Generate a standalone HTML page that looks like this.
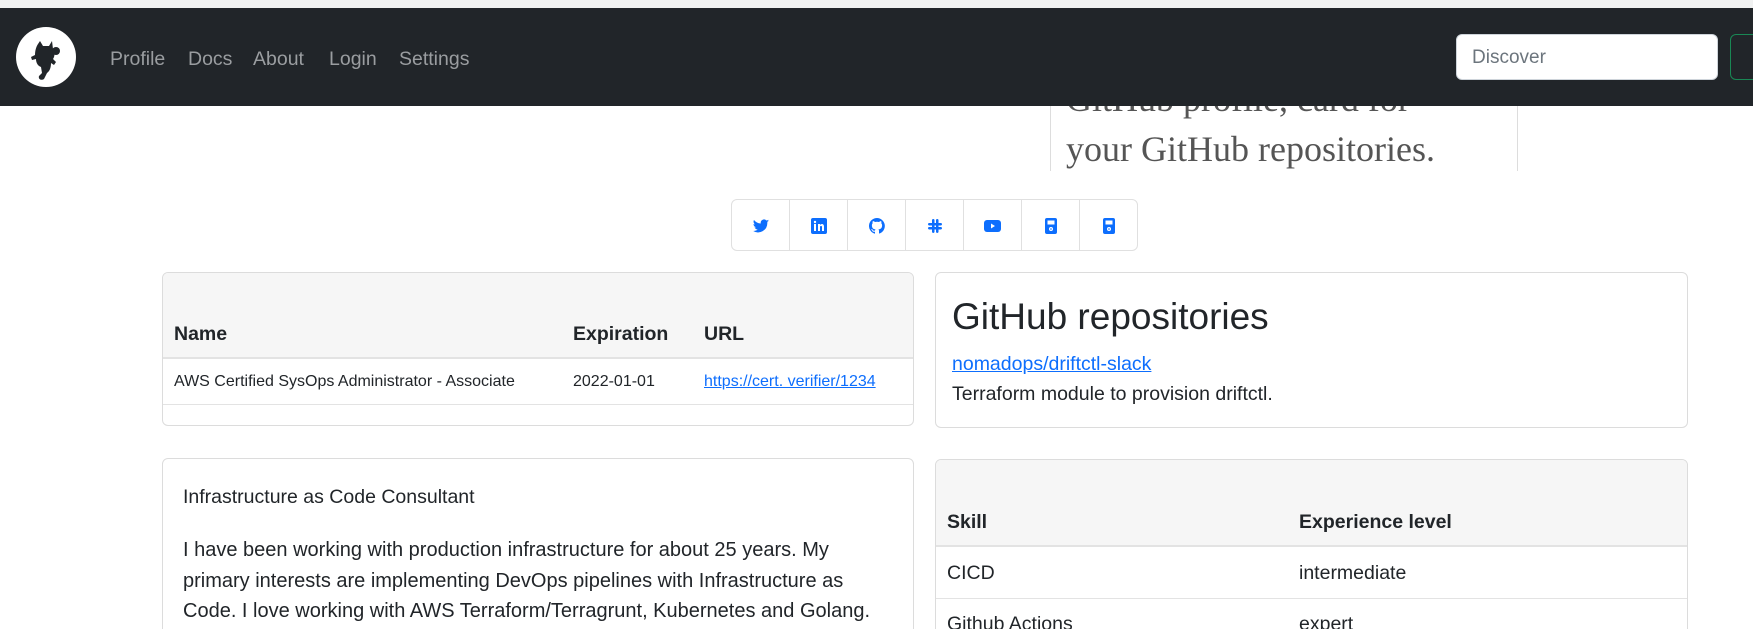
<!DOCTYPE html>
<html><head><meta charset="utf-8"><style>
*{box-sizing:border-box;margin:0;padding:0}
html,body{width:1753px;height:629px;overflow:hidden}
body{background:#fff;font-family:"Liberation Sans",sans-serif;color:#212529}
#w{position:relative;width:1753px;height:629px;overflow:hidden}
.a{position:absolute;white-space:nowrap}
.card{position:absolute;border:1px solid #dcdcdc;border-radius:6px;background:#fff;overflow:hidden}
.nav a{position:absolute;top:40px;font-size:19.5px;color:#9a9da0;text-decoration:none}
.sb{position:absolute;top:0;width:58px;height:51px;border-right:1px solid #e0e0e0;display:flex;align-items:center;justify-content:center}
</style></head><body><div id="w">
<div class="a" style="left:0;top:0;width:1753px;height:8px;background:#f0f1f1"></div>
<div class="a" style="left:1050px;top:80px;width:1px;height:91px;background:#ddd"></div>
<div class="a" style="left:1517px;top:80px;width:1px;height:91px;background:#ddd"></div>
<div class="a" style="left:1066px;top:74px;font-family:'Liberation Serif',serif;font-size:36px;color:#555;line-height:50px">GitHub profile, card for<br>your GitHub repositories.</div>
<div class="a nav" style="left:0;top:8px;width:1753px;height:98px;background:#212529">
 <div class="a" style="left:16px;top:19px;width:60px;height:60px;border-radius:50%;background:#fff">
  <svg width="60" height="60" viewBox="0 0 60 60"><path d="M24 14l3 5h6l3-5 1 8c2 3 2 7 0 10l3 3-2 3-3-2c0 4-1 8-4 10l-3 6c-3 2-6 0-5-3l3-3-1-6c-3-1-5-4-5-8l-4 1-1-3 4-2c0-4 1-8 3-11z" fill="#212529"/><circle cx="40" cy="24" r="4" fill="#212529"/></svg>
 </div>
 <a style="left:110px">Profile</a><a style="left:188px">Docs</a><a style="left:253px">About</a><a style="left:329px">Login</a><a style="left:399px">Settings</a>
 <div class="a" style="left:1456px;top:26px;width:262px;height:46px;background:#fff;border:1px solid #ced4da;border-radius:6px;padding:12px 15px;font-size:19px;color:#6c757d">Discover</div>
 <div class="a" style="left:1730px;top:26px;width:40px;height:46px;border:1px solid #198754;border-radius:6px"></div>
</div>
<div class="a" style="left:731px;top:199px;width:407px;height:52px;border:1px solid #e0e0e0;border-radius:6px;overflow:hidden">
 <div class="sb" style="left:0"><svg width="16" height="14" viewBox="0 0 16 14"><path d="M16 2c-.6.3-1.2.4-1.9.5.7-.4 1.2-1 1.4-1.8-.6.4-1.3.6-2.1.8A3.3 3.3 0 0 0 7.8 4.5 9.3 9.3 0 0 1 1 1a3.300 3.3 0 0 0 1 4.4c-.5 0-1-.2-1.5-.4 0 1.6 1.100 2.900 2.600 3.200-.5.100-1 .2-1.5.1.4 1.3 1.600 2.300 3.100 2.300A6.600 6.600 0 0 1 0 11.900 9.300 9.300 0 0 0 14.300 3.600V3.200C15 2.700 15.500 2.100 16 1.400z" fill="#0d6efd"/></svg></div>
 <div class="sb" style="left:58px"><svg width="16" height="16"><rect width="16" height="16" rx="2" fill="#0d6efd"/><rect x="3" y="6" width="2" height="7" fill="#fff"/><circle cx="4" cy="4" r="1.200" fill="#fff"/><path d="M7 6h2v1c1-1.500 4-1.500 4 1.500V13h-2V9c0-1.500-2-1.500-2 0v4H7z" fill="#fff"/></svg></div>
 <div class="sb" style="left:116px"><svg width="16" height="16" viewBox="0 0 16 16"><path d="M8 0a8 8 0 0 0-2.500 15.600c.4 0 .5-.2.5-.4v-1.500c-2.200.5-2.700-1-2.700-1-.4-.9-.9-1.200-.9-1.200-.7-.5.100-.5.100-.5.800.1 1.200.8 1.200.8.700 1.300 1.900.9 2.300.7.100-.5.300-.9.500-1.100-1.800-.2-3.600-.9-3.600-4 0-.9.300-1.600.8-2.100-.1-.2-.4-1 .1-2.100 0 0 .7-.2 2.200.8a7.500 7.500 0 0 1 4 0c1.500-1 2.200-.8 2.200-.8.400 1.100.2 1.900.1 2.100.5.600.8 1.300.8 2.100 0 3.100-1.900 3.800-3.700 4 .3.300.6.800.6 1.500v2.200c0 .2.100.5.600.4A8 8 0 0 0 8 0z" fill="#0d6efd"/></svg></div>
 <div class="sb" style="left:174px"><svg width="16" height="16"><g fill="#0d6efd"><rect x="5" y="1" width="2.500" height="14" rx="1.200"/><rect x="9" y="1" width="2.500" height="14" rx="1.200"/><rect x="1" y="5" width="14" height="2.500" rx="1.200"/><rect x="1" y="9" width="14" height="2.500" rx="1.200"/></g><rect x="7.500" y="7.500" width="1.500" height="1.500" fill="#fff"/></svg></div>
 <div class="sb" style="left:232px"><svg width="17" height="12"><rect width="17" height="12" rx="3" fill="#0d6efd"/><path d="M7 3.500v5l4-2.500z" fill="#fff"/></svg></div>
 <div class="sb" style="left:290px"><svg width="12" height="16"><rect width="12" height="16" rx="2" fill="#0d6efd"/><rect x="2.500" y="2.500" width="7" height="4" fill="#fff"/><circle cx="6" cy="11" r="2" fill="#fff"/><circle cx="6" cy="11" r=".8" fill="#0d6efd"/></svg></div>
 <div class="sb" style="left:348px;border-right:none"><svg width="12" height="16"><rect width="12" height="16" rx="2" fill="#0d6efd"/><rect x="2.500" y="2.500" width="7" height="4" fill="#fff"/><circle cx="6" cy="11" r="2" fill="#fff"/><circle cx="6" cy="11" r=".8" fill="#0d6efd"/></svg></div>
</div>
<div class="card" style="left:162px;top:272px;width:752px;height:154px">
 <div class="a" style="left:0;top:0;width:752px;height:86px;background:#f6f6f6;border-bottom:2px solid #e3e3e3"></div>
 <div class="a" style="left:11px;top:50px;font-size:19.5px;font-weight:bold">Name</div>
 <div class="a" style="left:410px;top:50px;font-size:19.5px;font-weight:bold">Expiration</div>
 <div class="a" style="left:541px;top:50px;font-size:19.5px;font-weight:bold">URL</div>
 <div class="a" style="left:11px;top:100px;font-size:16px">AWS Certified SysOps Administrator - Associate</div>
 <div class="a" style="left:410px;top:100px;font-size:16px">2022-01-01</div>
 <div class="a" style="left:541px;top:100px;font-size:16px;color:#0d6efd;text-decoration:underline">https://cert. verifier/1234</div>
 <div class="a" style="left:0;top:131px;width:752px;height:1px;background:#e3e3e3"></div>
</div>
<div class="card" style="left:935px;top:272px;width:753px;height:156px">
 <div class="a" style="left:16px;top:23px;font-size:37px;font-weight:500">GitHub repositories</div>
 <div class="a" style="left:16px;top:80px;font-size:19.5px;color:#0d6efd;text-decoration:underline">nomadops/driftctl-slack</div>
 <div class="a" style="left:16px;top:110px;font-size:19.5px">Terraform module to provision driftctl.</div>
</div>
<div class="card" style="left:162px;top:458px;width:752px;height:260px">
 <div class="a" style="left:20px;top:27px;font-size:19.5px">Infrastructure as Code Consultant</div>
 <div class="a" style="left:20px;top:76px;font-size:20px;line-height:30.500px">I have been working with production infrastructure for about 25 years. My<br>primary interests are implementing DevOps pipelines with Infrastructure as<br>Code. I love working with AWS Terraform/Terragrunt, Kubernetes and Golang.</div>
</div>
<div class="card" style="left:935px;top:459px;width:753px;height:260px">
 <div class="a" style="left:0;top:0;width:753px;height:87px;background:#f6f6f6;border-bottom:2px solid #e3e3e3"></div>
 <div class="a" style="left:11px;top:51px;font-size:19.5px;font-weight:bold">Skill</div>
 <div class="a" style="left:363px;top:51px;font-size:19.5px;font-weight:bold">Experience level</div>
 <div class="a" style="left:11px;top:102px;font-size:19.5px">CICD</div>
 <div class="a" style="left:363px;top:102px;font-size:19.5px">intermediate</div>
 <div class="a" style="left:0;top:138px;width:753px;height:1px;background:#e3e3e3"></div>
 <div class="a" style="left:11px;top:153px;font-size:19.5px">Github Actions</div>
 <div class="a" style="left:363px;top:153px;font-size:19.5px">expert</div>
</div>
</div></body></html>
